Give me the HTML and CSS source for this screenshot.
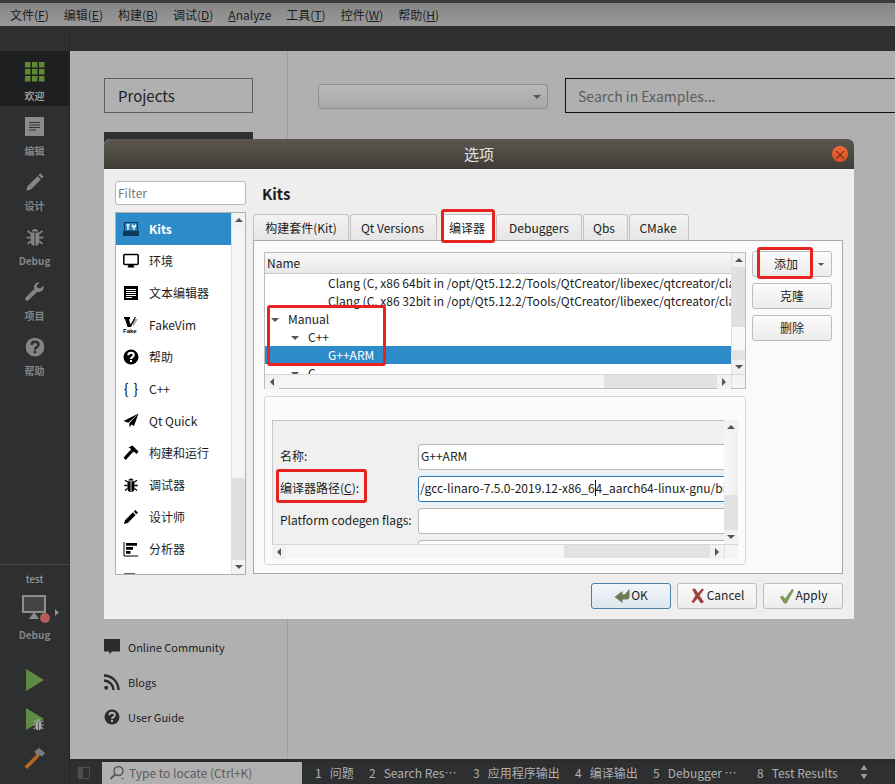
FILE: index.html
```html
<!DOCTYPE html>
<html lang="zh-Hans">
<head>
    <meta charset="UTF-8">
    <meta name="viewport" content="width=device-width, initial-scale=1.0">
    <title>选项</title>
    <link rel="stylesheet" href="styles.css">
</head>
<body>
    <!-- icon sprite -->
    <svg class="sprite" xmlns="http://www.w3.org/2000/svg">
        <symbol id="i-bug" viewBox="0 0 16 16">
            <path fill="currentColor" d="M8 1.500c1.300 0 2.300.8 2.600 2H5.400c.3-1.200 1.300-2 2.600-2zM4.500 4.300h3.100V15c-2 0-3.100-1.600-3.100-3.600zM8.400 4.300h3.100v7.100c0 2-1.100 3.600-3.100 3.600z"/>
            <path fill="none" stroke="currentColor" stroke-width="1.300" d="M4.500 5L2 3.200M11.500 5L14 3.200M4.500 8.500H1.300M11.500 8.500h3.200M4.500 11.500L2 13.500M11.500 11.500l2.500 2"/>
        </symbol>
        <symbol id="i-help" viewBox="0 0 16 16">
            <circle cx="8" cy="8" r="7.500" fill="currentColor"/>
            <path fill="none" stroke="var(--hole)" stroke-width="2" d="M5.200 6.300C5.300 4.600 6.500 3.800 8 3.800c1.700 0 2.800 1 2.800 2.300 0 2-2.800 2-2.800 4"/>
            <rect x="7" y="11" width="2" height="2" fill="var(--hole)"/>
        </symbol>
        <symbol id="i-pencil" viewBox="0 0 16 16">
            <path fill="currentColor" d="M12.300 1l2.700 2.700-1.500 1.500-2.700-2.700zM10 3.300L12.700 6l-8 8L1 15l1-3.700z"/>
        </symbol>
        <symbol id="i-hammer" viewBox="0 0 16 16">
            <path fill="currentColor" d="M5.500 2.500L9.500.5l6 6-2 2.500-2.500-2.500-1.300 1.300-2.200-2.200L8 4z"/>
            <path fill="currentColor" d="M7.200 5.300l2.300 2.300-6.700 7.400L.5 12.700z"/>
        </symbol>
    </svg>

    <div class="top-strip"></div>

    <div class="menubar">
        <span class="menu-item">文件(<u>F</u>)</span>
        <span class="menu-item">编辑(<u>E</u>)</span>
        <span class="menu-item">构建(<u>B</u>)</span>
        <span class="menu-item">调试(<u>D</u>)</span>
        <span class="menu-item"><u>A</u>nalyze</span>
        <span class="menu-item">工具(<u>T</u>)</span>
        <span class="menu-item">控件(<u>W</u>)</span>
        <span class="menu-item">帮助(<u>H</u>)</span>
    </div>

    <div class="workspace">
        <!-- left mode bar -->
        <div class="modebar">
            <div class="mode-spacer"></div>
            <div class="mode-item mode-active">
                <svg class="mode-icon" viewBox="0 0 20 20">
                    <g fill="#5d8a33">
                        <rect x="0" y="0" width="5.500" height="5.500"/><rect x="7" y="0" width="5.500" height="5.500"/><rect x="14" y="0" width="5.500" height="5.500"/>
                        <rect x="0" y="7" width="5.500" height="5.500"/><rect x="7" y="7" width="5.500" height="5.500"/><rect x="14" y="7" width="5.500" height="5.500"/>
                        <rect x="0" y="14" width="5.500" height="5.500"/><rect x="7" y="14" width="5.500" height="5.500"/><rect x="14" y="14" width="5.500" height="5.500"/>
                    </g>
                </svg>
                <span>欢迎</span>
            </div>
            <div class="mode-item">
                <svg class="mode-icon" viewBox="0 0 20 20">
                    <rect width="19" height="19" fill="#8b8b8b"/>
                    <path fill="none" stroke="#333" d="M4 5.500h11M4 8h11M4 10.500h11M4 13h7"/>
                </svg>
                <span>编辑</span>
            </div>
            <div class="mode-item">
                <svg class="mode-icon"><use href="#i-pencil"/></svg>
                <span>设计</span>
            </div>
            <div class="mode-item">
                <svg class="mode-icon"><use href="#i-bug"/></svg>
                <span>Debug</span>
            </div>
            <div class="mode-item">
                <svg class="mode-icon" viewBox="0 0 20 20">
                    <path fill="currentColor" d="M13.500 0.500c-2.500 0-4.500 2-4.500 4.500 0 .7.100 1.200.4 1.800L0.500 15.800c-.6.700-.6 1.600 0 2.200l.6.600c.6.600 1.500.6 2.200 0l9-8.900c.5.200 1 .3 1.600.3 2.600 0 4.700-2 4.700-4.700 0-.6-.1-1.100-.3-1.600l-3 2.800-3-.8-.6-2.800 3-2.200c-.6-.2-1.200-.2-1.700-.2z"/>
                </svg>
                <span>项目</span>
            </div>
            <div class="mode-item">
                <svg class="mode-icon"><use href="#i-help"/></svg>
                <span>帮助</span>
            </div>

            <div class="kit-box">
                <div class="kit-name">test</div>
                <div class="kit-target">
                    <svg class="kit-monitor" viewBox="0 0 40 30">
                        <rect x="1" y="1" width="22" height="16" fill="#454545" stroke="#8e8e8e" stroke-width="2"/>
                        <path fill="#8e8e8e" d="M12 17l5 7H7z"/>
                        <circle cx="23" cy="23" r="5" fill="#b85a5a"/>
                        <path fill="#8e8e8e" d="M33 14l4 3.500-4 3.500z"/>
                    </svg>
                </div>
                <div class="kit-label">Debug</div>
                <div class="kit-actions">
                    <svg class="kit-run" viewBox="0 0 20 24"><path fill="#5f8a44" d="M1 1l18 11L1 23z"/></svg>
                    <svg class="kit-run" viewBox="0 0 20 24">
                        <path fill="#5f8a44" d="M1 1l18 11L1 23z"/>
                        <g color="#aaa"><use href="#i-bug" x="7" y="11" width="13" height="13"/></g>
                    </svg>
                    <svg class="kit-hammer" viewBox="0 0 24 24">
                        <path fill="#b5651d" d="M14 8l2.500 2.500L4 23l-2.500-2.500z"/>
                        <path fill="#7d7d7d" d="M11.500 5.500L16 2l6 5-3 3.500-2.500-1.500-2 1.500z"/>
                    </svg>
                </div>
            </div>
        </div>

        <div class="content">
            <div class="toolbar"></div>

            <!-- welcome page, dimmed behind the dialog -->
            <div class="welcome">
                <div class="welcome-left">
                    <div class="welcome-btn">Projects</div>
                    <div class="welcome-dark"></div>
                    <div class="welcome-links">
                        <div class="link-row">
                            <svg class="link-icon" viewBox="0 0 16 16"><path fill="#2b2b2b" d="M0 0h16v12.500H8L5.500 15 5 12.500H0z"/></svg>
                            <span>Online Community</span>
                        </div>
                        <div class="link-row">
                            <svg class="link-icon" viewBox="0 0 16 16">
                                <circle cx="2.200" cy="13.800" r="2" fill="#2b2b2b"/>
                                <path fill="none" stroke="#2b2b2b" stroke-width="2.400" d="M0 6.500c5 0 9.500 4.500 9.500 9.500M0 1.500c8 0 14.500 6.500 14.500 14.500"/>
                            </svg>
                            <span>Blogs</span>
                        </div>
                        <div class="link-row link-help">
                            <svg class="link-icon"><use href="#i-help"/></svg>
                            <span>User Guide</span>
                        </div>
                    </div>
                </div>
                <div class="welcome-right">
                    <div class="welcome-combo"><i class="arrow-down"></i></div>
                    <div class="welcome-search">Search in Examples...</div>
                </div>
            </div>

            <div class="statusbar">
                <svg class="status-toggle" viewBox="0 0 12 12">
                    <rect x="0.500" y="0.500" width="11" height="11" fill="none" stroke="#4d4e4f"/>
                    <rect x="1" y="1" width="4" height="10" fill="#4d4e4f"/>
                </svg>
                <div class="locator">
                    <svg class="locator-icon" viewBox="0 0 16 16">
                        <circle cx="9.500" cy="6" r="4.500" fill="none" stroke="#555" stroke-width="1.400"/>
                        <path stroke="#555" stroke-width="1.800" d="M6 9.500L1.500 14"/>
                        <path fill="#555" d="M12 13h3l-1.500 1.500z"/>
                    </svg>
                    <span>Type to locate (Ctrl+K)</span>
                </div>
                <div class="panes">
                    <span class="pane-item pane-1"><b>1</b>问题</span>
                    <span class="pane-item pane-2"><b>2</b>Search Res…</span>
                    <span class="pane-item pane-3"><b>3</b>应用程序输出</span>
                    <span class="pane-item pane-4"><b>4</b>编译输出</span>
                    <span class="pane-item pane-5"><b>5</b>Debugger …</span>
                    <span class="pane-item pane-6"><b>8</b>Test Results</span>
                    <svg class="pane-more" viewBox="0 0 8 14"><path fill="#9a9a9a" d="M4 0l3.500 5h-7zM4 14L.5 9h7z"/></svg>
                </div>
            </div>
        </div>
    </div>

    <!-- options dialog -->
    <div class="dialog">
        <div class="dialog-title">
            <span>选项</span>
            <span class="dialog-close">×</span>
        </div>
        <div class="dialog-body">
            <div class="dialog-main">
                <div class="nav">
                    <div class="filter">Filter</div>
                    <div class="nav-list">
                        <div class="nav-rows">
                            <div class="nav-row nav-active">
                                <svg class="nav-icon" viewBox="0 0 16 16">
                                    <path fill="#0d3a5a" d="M0 9.500h16V15H0z"/>
                                    <path fill="none" stroke="#0d3a5a" stroke-width="1.200" d="M1.500 9V1.500h13V9"/>
                                    <path fill="none" stroke="#fff" stroke-width="1.300" d="M3.500 4h3M5 4v5M9.500 3.500v2h3v-2M11 5.500V9"/>
                                </svg>
                                <span>Kits</span>
                            </div>
                            <div class="nav-row">
                                <svg class="nav-icon" viewBox="0 0 16 16">
                                    <rect x="0.800" y="1.500" width="14.400" height="10" rx="1" fill="none" stroke="#000" stroke-width="1.500"/>
                                    <path fill="#000" d="M5.500 12h5l1 2.500h-7z"/>
                                </svg>
                                <span>环境</span>
                            </div>
                            <div class="nav-row">
                                <svg class="nav-icon" viewBox="0 0 16 16">
                                    <rect x="1" y="1" width="14" height="14" fill="#000"/>
                                    <path fill="none" stroke="#fff" d="M3 4.500h10M3 6.500h10M3 8.500h10M3 10.500h10M3 12.500h6"/>
                                </svg>
                                <span>文本编辑器</span>
                            </div>
                            <div class="nav-row">
                                <svg class="nav-icon" viewBox="0 0 16 16">
                                    <path fill="#aaa" d="M10 2h5l-5 8z"/>
                                    <path fill="#000" d="M1 0h6v2L6 2.500l1.500 5L12 0h1L8 10H4.500L2 2H1z"/>
                                    <text class="fake-text" x="0" y="15.500">Fake</text>
                                </svg>
                                <span>FakeVim</span>
                            </div>
                            <div class="nav-row">
                                <svg class="nav-icon nav-help"><use href="#i-help"/></svg>
                                <span>帮助</span>
                            </div>
                            <div class="nav-row">
                                <span class="nav-glyph">{ }</span>
                                <span>C++</span>
                            </div>
                            <div class="nav-row">
                                <svg class="nav-icon" viewBox="0 0 16 16">
                                    <path fill="#000" d="M15.500 .5L.5 8l4.800 1.800L15.500 .5zM15.500 .5L6.300 10.300l.3 4.200 1.900-3 2.500 1.500z"/>
                                </svg>
                                <span>Qt Quick</span>
                            </div>
                            <div class="nav-row">
                                <svg class="nav-icon"><use href="#i-hammer"/></svg>
                                <span>构建和运行</span>
                            </div>
                            <div class="nav-row">
                                <svg class="nav-icon"><use href="#i-bug"/></svg>
                                <span>调试器</span>
                            </div>
                            <div class="nav-row">
                                <svg class="nav-icon"><use href="#i-pencil"/></svg>
                                <span>设计师</span>
                            </div>
                            <div class="nav-row">
                                <svg class="nav-icon" viewBox="0 0 16 16">
                                    <path fill="none" stroke="#000" d="M1 1v14h14"/>
                                    <path fill="#000" d="M3 2h11v2.800H3zM3 6h7v2.800H3zM3 10h4.500v2.800H3z"/>
                                </svg>
                                <span>分析器</span>
                            </div>
                            <div class="nav-row">
                                <svg class="nav-icon" viewBox="0 0 16 16">
                                    <rect x="1.500" y="1" width="10" height="13" fill="none" stroke="#000" stroke-width="1.200"/>
                                </svg>
                                <span>版本控制</span>
                            </div>
                        </div>
                        <div class="scroll-v nav-scroll">
                            <div class="scroll-btn"><i class="arrow-up"></i></div>
                            <div class="nav-thumb"></div>
                            <div class="nav-track"></div>
                            <div class="scroll-btn"><i class="arrow-down"></i></div>
                        </div>
                    </div>
                </div>

                <div class="page">
                    <h2 class="page-title">Kits</h2>
                    <div class="tabs">
                        <span class="tab tab-kit">构建套件(Kit)</span>
                        <span class="tab tab-qt">Qt Versions</span>
                        <span class="tab tab-active">编译器</span>
                        <span class="tab tab-dbg">Debuggers</span>
                        <span class="tab tab-qbs">Qbs</span>
                        <span class="tab tab-cmake">CMake</span>
                    </div>
                    <div class="tab-pane">
                        <div class="pane-top">
                            <div class="tree">
                                <div class="tree-main">
                                    <div class="tree-left">
                                        <div class="tree-head">Name</div>
                                        <div class="tree-row lvl-3">Clang (C, x86 64bit in /opt/Qt5.12.2/Tools/QtCreator/libexec/qtcreator/clang/bin/clang)</div>
                                        <div class="tree-row lvl-3">Clang (C, x86 32bit in /opt/Qt5.12.2/Tools/QtCreator/libexec/qtcreator/clang/bin/clang)</div>
                                        <div class="tree-row lvl-1"><i class="arrow-down"></i>Manual</div>
                                        <div class="tree-row lvl-2"><i class="arrow-down"></i>C++</div>
                                        <div class="tree-row lvl-3 tree-selected">G++ARM</div>
                                        <div class="tree-row lvl-2"><i class="arrow-down"></i>C</div>
                                    </div>
                                    <div class="scroll-v tree-scroll">
                                        <div class="scroll-btn"><i class="arrow-up"></i></div>
                                        <div class="tree-thumb"></div>
                                        <div class="tree-track"></div>
                                        <div class="scroll-btn"><i class="arrow-down"></i></div>
                                    </div>
                                </div>
                                <div class="scroll-h">
                                    <div class="scroll-btn"><i class="arrow-left"></i></div>
                                    <div class="tree-hthumb"></div>
                                    <div class="tree-htrack"></div>
                                    <div class="scroll-btn"><i class="arrow-right"></i></div>
                                    <div class="scroll-corner"></div>
                                </div>
                            </div>
                            <div class="side-btns">
                                <div class="btn btn-split">
                                    <span class="btn-split-main">添加</span>
                                    <span class="btn-split-arrow"><i class="arrow-down"></i></span>
                                </div>
                                <div class="btn">克隆</div>
                                <div class="btn">删除</div>
                            </div>
                        </div>

                        <div class="details">
                            <div class="details-view">
                                <div class="details-main">
                                    <div class="form">
                                        <div class="form-row">
                                            <label class="form-label">名称:</label>
                                            <div class="form-input">G++ARM</div>
                                        </div>
                                        <div class="form-row">
                                            <label class="form-label">编译器路径(<u>C</u>):</label>
                                            <div class="form-input form-focus">/gcc-linaro-7.5.0-2019.12-x86_6<span class="caret"></span>4_aarch64-linux-gnu/bin/aarch64-linux-gnu-g++</div>
                                        </div>
                                        <div class="form-row">
                                            <label class="form-label">Platform codegen flags:</label>
                                            <div class="form-input"></div>
                                        </div>
                                        <div class="form-row">
                                            <label class="form-label"></label>
                                            <div class="form-input"></div>
                                        </div>
                                    </div>
                                    <div class="scroll-v details-scroll">
                                        <div class="scroll-btn"><i class="arrow-up"></i></div>
                                        <div class="details-thumb"></div>
                                        <div class="details-track"></div>
                                        <div class="scroll-btn"><i class="arrow-down"></i></div>
                                    </div>
                                </div>
                                <div class="scroll-h">
                                    <div class="scroll-btn"><i class="arrow-left"></i></div>
                                    <div class="details-hthumb"></div>
                                    <div class="details-htrack"></div>
                                    <div class="scroll-btn"><i class="arrow-right"></i></div>
                                    <div class="scroll-corner"></div>
                                </div>
                            </div>
                        </div>
                    </div>
                </div>
            </div>

            <div class="dialog-footer">
                <div class="btn btn-foot btn-default">
                    <svg class="foot-icon" viewBox="0 0 16 16">
                        <path fill="#6d7a55" d="M15.500 1v7.500c0 2-1 3-3 3H8.500V15L.5 9l8-6v3.500h2z"/>
                    </svg>OK
                </div>
                <div class="btn btn-foot">
                    <svg class="foot-icon" viewBox="0 0 16 16">
                        <path fill="#a1403c" d="M2 1l3-.5 3 4.500 4-4.500 2 1-4.500 6L14 14l-3 1.500-3.500-5L3.500 15 1.500 14l4-6.500z"/>
                    </svg>Cancel
                </div>
                <div class="btn btn-foot">
                    <svg class="foot-icon" viewBox="0 0 16 16">
                        <path fill="#7d9a5a" d="M1 9l2.500-1.500 2.500 3L13 1l2 1-7.500 13.500H5z"/>
                    </svg>Apply
                </div>
            </div>
        </div>

        <!-- red annotation boxes -->
        <div class="mark mark-tab"></div>
        <div class="mark mark-add"></div>
        <div class="mark mark-tree"></div>
        <div class="mark mark-path"></div>
    </div>
</body>
</html>
```

FILE: styles.css
```css
* {
    box-sizing: border-box;
}

body {
    font-family: "Noto Sans CJK SC", "Noto Sans", sans-serif;
    font-size: 12px;
    background-color: #b0b0b0;
    color: #1a1a1a;
    margin: 0;
    height: 784px;
    display: flex;
    flex-direction: column;
    overflow: hidden;
}

.sprite {
    display: none;
}

u {
    text-underline-offset: 1px;
}

.top-strip {
    height: 3px;
    background-color: #3c3b38;
}

.menubar {
    height: 23px;
    display: flex;
    align-items: center;
    padding-left: 10px;
    background: linear-gradient(#858585, #9a9a9a);
    color: #1c1c1c;
}

.menu-item {
    margin-right: 15px;
    line-height: 23px;
}

.workspace {
    flex: 1;
    display: flex;
    min-height: 0;
}

/* mode bar */
.modebar {
    width: 70px;
    background-color: #2e2f30;
    border-right: 1px solid #262728;
    display: flex;
    flex-direction: column;
    color: #858585;
    --hole: #2e2f30;
}

.mode-spacer {
    height: 25px;
}

.mode-item {
    height: 55px;
    padding-top: 11px;
    display: flex;
    flex-direction: column;
    align-items: center;
    font-size: 10px;
    font-weight: bold;
    line-height: 14px;
}

.mode-active {
    background-color: #1e1f20;
    color: #9a9a9a;
}

.mode-icon {
    width: 20px;
    height: 20px;
    margin-bottom: 7px;
    flex: none;
}

.kit-box {
    margin-top: auto;
    height: 220px;
    border-top: 1px solid #454647;
    display: flex;
    flex-direction: column;
    align-items: center;
}

.kit-name {
    margin-top: 6px;
    line-height: 16px;
    font-size: 10px;
    color: #a5a5a5;
}

.kit-target {
    margin-top: 8px;
    height: 28px;
    padding-left: 14px;
}

.kit-monitor {
    display: block;
    width: 40px;
    height: 30px;
}

.kit-label {
    margin-top: 4px;
    font-size: 10px;
    font-weight: bold;
    line-height: 16px;
}

.kit-actions {
    margin-top: 25px;
    display: flex;
    flex-direction: column;
    align-items: center;
    gap: 15px;
}

.kit-run {
    width: 20px;
    height: 24px;
    display: block;
}

.kit-hammer {
    width: 24px;
    height: 24px;
    display: block;
}

/* right side */
.content {
    flex: 1;
    display: flex;
    flex-direction: column;
    min-width: 0;
}

.toolbar {
    height: 25px;
    background-color: #2e2f30;
}

.welcome {
    flex: 1;
    display: flex;
    min-height: 0;
    background-color: #b0b0b0;
}

.welcome-left {
    width: 218px;
    border-right: 1px solid #a0a0a0;
    padding: 27px 34px 25px;
    display: flex;
    flex-direction: column;
}

.welcome-btn {
    width: 149px;
    height: 35px;
    flex: none;
    border: 1px solid #5e5e5e;
    padding-left: 13px;
    font-size: 15px;
    line-height: 33px;
    color: #222;
}

.welcome-dark {
    width: 149px;
    height: 100px;
    margin-top: 19px;
    flex: none;
    background-color: #2f3031;
}

.welcome-links {
    margin-top: auto;
}

.link-row {
    height: 35px;
    display: flex;
    align-items: center;
    font-size: 11px;
    color: #222;
    --hole: #b0b0b0;
}

.link-icon {
    width: 16px;
    height: 16px;
    margin-right: 8px;
    flex: none;
    color: #2b2b2b;
}

.welcome-right {
    flex: 1;
    display: flex;
    align-items: flex-start;
    padding: 27px 0 0 30px;
}

.welcome-combo {
    width: 230px;
    height: 25px;
    margin-top: 6px;
    flex: none;
    border: 1px solid #8f8f8f;
    border-radius: 3px;
    background: linear-gradient(#b8b8b8, #a9a9a9);
    display: flex;
    align-items: center;
    justify-content: flex-end;
    padding-right: 6px;
}

.welcome-search {
    flex: 1;
    height: 35px;
    margin: 0 -2px 0 17px;
    border: 1px solid #111;
    padding-left: 12px;
    font-size: 14px;
    line-height: 34px;
    color: #5c5c5c;
}

.statusbar {
    height: 25px;
    background-color: #2e2f30;
    border-top: 3px solid #2a2b2c;
    display: flex;
    align-items: center;
    color: #b0b0b0;
}

.status-toggle {
    width: 12px;
    height: 12px;
    margin-left: 8px;
    flex: none;
}

.locator {
    width: 200px;
    height: 22px;
    margin-left: 12px;
    padding: 0 0 1px 7px;
    background-color: #b0b0b0;
    color: #5c5c5c;
    display: flex;
    align-items: center;
}

.locator-icon {
    width: 16px;
    height: 16px;
    margin-right: 4px;
}

.panes {
    display: flex;
    align-items: center;
    padding: 0 0 2px 13px;
}

.pane-item {
    display: block;
    white-space: nowrap;
}

.pane-item b {
    font-weight: normal;
    margin-right: 8px;
}

.pane-1 { width: 54px; }
.pane-2 { width: 104px; }
.pane-3 { width: 102px; }
.pane-4 { width: 78px; }
.pane-5 { width: 104px; }
.pane-6 { width: 103px; }

.pane-more {
    width: 8px;
    height: 14px;
}

/* small arrows */
.arrow-down, .arrow-up, .arrow-left, .arrow-right {
    display: inline-block;
    width: 0;
    height: 0;
    border-style: solid;
    border-color: transparent;
}

.arrow-down {
    border-width: 4px 4px 0;
    border-top-color: #555;
}

.arrow-up {
    border-width: 0 4px 4px;
    border-bottom-color: #555;
}

.arrow-left {
    border-width: 4px 4px 4px 0;
    border-right-color: #555;
}

.arrow-right {
    border-width: 4px 0 4px 4px;
    border-left-color: #555;
}

/* dialog */
.dialog {
    position: absolute;
    left: 104px;
    top: 139px;
    width: 750px;
    height: 480px;
    border-radius: 6px 6px 0 0;
    background-color: #eeeeee;
    display: flex;
    flex-direction: column;
    color: #1c1c1c;
    --hole: #fff;
}

.dialog-title {
    height: 30px;
    flex: none;
    position: relative;
    border-radius: 6px 6px 0 0;
    background: linear-gradient(#5b5750, #3f3c37);
    color: #e6e6e6;
    text-align: center;
    font-size: 15px;
    line-height: 30px;
}

.dialog-close {
    position: absolute;
    right: 6px;
    top: 7px;
    width: 16px;
    height: 16px;
    border-radius: 50%;
    background: linear-gradient(#f0683a, #d84f22);
    color: #5a2410;
    font-size: 13px;
    line-height: 15px;
}

.dialog-body {
    flex: 1;
    padding: 12px 11px 12px 11px;
    display: flex;
    flex-direction: column;
    min-height: 0;
}

.dialog-main {
    height: 394px;
    display: flex;
    gap: 7px;
}

.nav {
    width: 131px;
    flex: none;
}

.filter {
    height: 24px;
    background-color: #fff;
    border: 1px solid #b5b5b5;
    border-radius: 3px;
    padding-left: 2px;
    line-height: 21px;
    color: #7a7a7a;
}

.nav-list {
    margin-top: 7px;
    height: 363px;
    background-color: #fff;
    border: 1px solid #b0b0b0;
    display: flex;
    overflow: hidden;
}

.nav-rows {
    flex: 1;
    min-width: 0;
}

.nav-row {
    height: 32px;
    display: flex;
    align-items: center;
    padding-left: 7px;
    white-space: nowrap;
}

.nav-row span {
    position: relative;
    top: -1px;
}

.nav-active {
    background-color: #2e8bc9;
    color: #fff;
    font-weight: bold;
}

.nav-icon {
    width: 16px;
    height: 16px;
    margin-right: 10px;
    flex: none;
    color: #000;
}

.nav-glyph {
    width: 16px;
    margin-right: 10px;
    font-size: 14px;
    word-spacing: 2px;
    text-align: center;
    white-space: nowrap;
    color: #000;
}

.fake-text {
    font-family: "Liberation Sans", sans-serif;
    font-size: 6px;
    font-weight: bold;
}

.page {
    flex: 1;
    min-width: 0;
    display: flex;
    flex-direction: column;
}

.page-title {
    margin: 0 0 0 9px;
    height: 33px;
    font-size: 15px;
    line-height: 25px;
}

/* tabs */
.tabs {
    height: 26px;
    display: flex;
    align-items: flex-end;
}

.tab {
    height: 26px;
    margin-right: 1px;
    background: linear-gradient(#f3f3f3, #e6e6e6);
    border: 1px solid #c2c2c2;
    border-bottom: 0;
    border-radius: 3px 3px 0 0;
    text-align: center;
    line-height: 25px;
}

.tab-kit { width: 96px; }
.tab-qt { width: 87px; margin-right: 4px; padding-right: 2px; }
.tab-active { width: 54px; padding-right: 2px; background: #fbfbfb; }
.tab-dbg { width: 86px; }
.tab-qbs { width: 45px; padding-right: 3px; }
.tab-cmake { width: 60px; padding-right: 2px; }

.tab-pane {
    height: 334px;
    background-color: #fafafa;
    border: 1px solid #a8a8a8;
    padding: 11px 10px 10px;
}

.pane-top {
    display: flex;
    gap: 6px;
}

/* compiler tree */
.tree {
    width: 482px;
    height: 137px;
    flex: none;
    border: 1px solid #bdbdbd;
    background-color: #fff;
    display: flex;
    flex-direction: column;
}

.tree-main {
    height: 121px;
    display: flex;
    overflow: hidden;
}

.tree-left {
    flex: 1;
    min-width: 0;
    overflow: hidden;
}

.tree-head {
    height: 21px;
    padding-left: 2px;
    background: linear-gradient(#f8f8f8, #e8e8e8);
    border-bottom: 1px solid #c8c8c8;
    line-height: 19px;
}

.tree-row {
    height: 18px;
    line-height: 18px;
    white-space: nowrap;
}

.tree-row .arrow-down {
    margin-right: 9px;
    vertical-align: 2px;
}

.lvl-1 { padding-left: 6px; }
.lvl-2 { padding-left: 26px; }
.lvl-3 { padding-left: 63px; }

.tree-selected {
    background-color: #2e8bc9;
    color: #fff;
}

.scroll-v {
    width: 14px;
    flex: none;
    display: flex;
    flex-direction: column;
    background-color: #f4f4f4;
    border-left: 1px solid #e0e0e0;
}

.scroll-btn {
    width: 14px;
    height: 14px;
    flex: none;
    display: flex;
    align-items: center;
    justify-content: center;
    background-color: #f2f2f2;
}

.scroll-h {
    height: 14px;
    flex: none;
    display: flex;
    background-color: #f6f6f6;
    border-top: 1px solid #d8d8d8;
}

.scroll-corner {
    width: 14px;
    flex: none;
    background-color: #f4f4f4;
    border-left: 1px solid #e0e0e0;
}

.nav-scroll {
    width: 14px;
}

.nav-thumb {
    height: 251px;
    background-color: #f5f5f5;
}

.nav-track {
    flex: 1;
    background-color: #e0e0e0;
}

.tree-thumb {
    height: 60px;
    background-color: #e0e0e0;
}

.tree-track {
    flex: 1;
    background: linear-gradient(#f8f8f8 70%, #e4e4e4 70%);
}

.tree-hthumb {
    width: 325px;
}

.tree-htrack {
    flex: 1;
    background-color: #e2e2e2;
}

/* details */
.details {
    margin-top: 7px;
    height: 169px;
    width: 482px;
    border: 1px solid #d6d6d6;
    border-radius: 3px;
    background-color: #fbfbfb;
    padding: 23px 7px 6px;
}

.details-view {
    height: 138px;
    display: flex;
    flex-direction: column;
}

.details-main {
    height: 124px;
    display: flex;
}

.form {
    flex: 1;
    min-width: 0;
    overflow: hidden;
    background-color: #f0f0f0;
    border: 1px solid #c6c6c6;
    border-right: 0;
    border-bottom: 0;
    padding-top: 23px;
}

.form-row {
    height: 26px;
    margin-bottom: 6px;
    display: flex;
    align-items: center;
}

.form-label {
    width: 145px;
    padding: 0 0 3px 7px;
    flex: none;
    white-space: nowrap;
}

.form-input {
    flex: 1;
    height: 26px;
    min-width: 0;
    margin-right: -6px;
    background-color: #fff;
    border: 1px solid #b5b5b5;
    border-radius: 3px;
    padding-left: 2px;
    line-height: 22px;
    white-space: nowrap;
    overflow: hidden;
}

.form-focus {
    padding-left: 1px;
    border-color: #2e7ab0;
    box-shadow: 0 0 0 4px #e8f1f8;
    overflow: hidden;
}

.caret {
    display: inline-block;
    width: 0;
    height: 16px;
    border-left: 1px solid #111;
    vertical-align: -3px;
}

.details-scroll {
    border-left: 0;
    background-color: #f4f4f4;
}

.details-thumb {
    height: 61px;
    background: linear-gradient(90deg, #f8f8f8, #eeeeee);
}

.details-track {
    flex: 1;
    background-color: #e2e2e2;
}

.details-hthumb {
    width: 278px;
}

.details-htrack {
    flex: 1;
    background-color: #e2e2e2;
}

/* buttons */
.btn {
    height: 26px;
    background: linear-gradient(#fbfbfb, #ececec);
    border: 1px solid #bcbcbc;
    border-radius: 3px;
    text-align: center;
    line-height: 24px;
}

.side-btns {
    width: 80px;
    margin-top: -1px;
    flex: none;
    display: flex;
    flex-direction: column;
    gap: 6px;
}

.btn-split {
    display: flex;
}

.btn-split-main {
    flex: 1;
    padding-left: 8px;
}

.btn-split-arrow {
    width: 20px;
    display: flex;
    align-items: center;
    justify-content: center;
}

.btn-split-arrow .arrow-down {
    border-width: 3px 3px 0;
}

.dialog-footer {
    margin-top: 8px;
    display: flex;
    justify-content: flex-end;
    gap: 6px;
}

.btn-foot {
    width: 80px;
    display: flex;
    align-items: center;
    justify-content: center;
    padding-bottom: 2px;
}

.btn-default {
    border-color: #4b7fa8;
    background: linear-gradient(#f2f6f9, #dde6ee);
}

.foot-icon {
    width: 16px;
    height: 16px;
    margin: 2px 1px 0 0;
}

/* red annotations */
.mark {
    position: absolute;
    border: 3px solid #e8231f;
    border-radius: 3px;
}

.mark-tab { left: 337px; top: 70px; width: 54px; height: 34px; }
.mark-add { left: 653px; top: 108px; width: 56px; height: 32px; }
.mark-tree { left: 163px; top: 166px; width: 119px; height: 61px; }
.mark-path { left: 172px; top: 330px; width: 91px; height: 34px; }
```
